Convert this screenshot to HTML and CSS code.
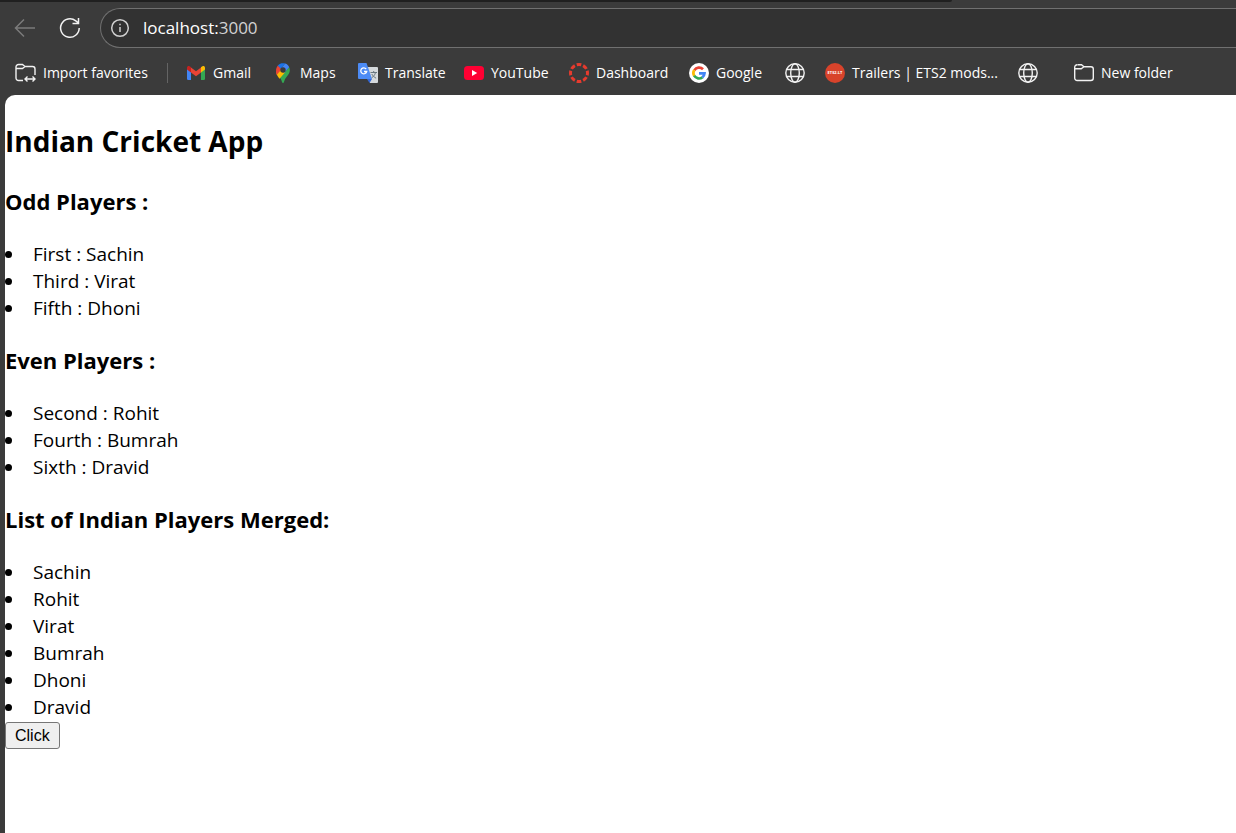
FILE: index.html
```html
<!DOCTYPE html>
<html lang="en">
<head>
<meta charset="utf-8">
<title>Indian Cricket App</title>
<link rel="stylesheet" href="styles.css">
</head>
<body>
<header class="browser">
  <div class="tab-strip"></div>
  <div class="toolbar">
    <button class="tool back" aria-label="Back" disabled><svg width="22" height="22" viewBox="0 0 22 22"><path d="M21 11H2M10 2.500 1.500 11l8.500 8.500"/></svg></button>
    <button class="tool" aria-label="Reload"><svg width="22" height="22" viewBox="0 0 22 22"><path d="M20.200 11a9.300 9.300 0 1 1-3.400-7.200L19.500 6M19.500 1v5.500H13.500"/></svg></button>
    <div class="address">
      <svg width="20" height="20" viewBox="0 0 20 20"><circle cx="10" cy="10" r="8.300"/><path d="M10 9v5M10 5.700v1.600"/></svg>
      <div class="url" role="textbox" aria-label="Address" contenteditable="true">localhost:<span class="port">3000</span></div>
    </div>
  </div>
  <nav class="favorites" aria-label="Favorites">
    <button class="fav import"><svg class="line" width="21" height="20" viewBox="0 0 21 20"><path d="M8 17.500H3.500a2.500 2.500 0 0 1-2.500-2.500V4a2.500 2.500 0 0 1 2.500-2.500h4L10 3.500h7.500A2.500 2.500 0 0 1 20 6v6M1 5.500h6.500L10 3.500M10 16h10M12.500 13.500 10 16l2.500 2.500M17.500 13.500 20 16l-2.500 2.500"/></svg>Import favorites</button>
    <span class="divider"></span>
    <a class="fav gmail" href="#"><svg width="20" height="20" viewBox="0 0 20 20"><path fill="#4285f4" d="M1 5l4 3v9H2.300Q1 17 1 15.700z"/><path fill="#34a853" d="M15 8l4-3v10.700q0 1.300-1.300 1.300H15z"/><path fill="#ea4335" d="M5 4.500l5 3.800 5-3.800v5L10 13.300 5 9.500z"/><path fill="#c5221f" d="M1 5c0-2 2-2.500 3.400-1.300L5 4.200v5.300L1 6.500z"/><path fill="#fbbc04" d="M19 5c0-2-2-2.500-3.400-1.300l-.6.500v5.300l4-3z"/></svg>Gmail</a>
    <a class="fav maps" href="#"><svg width="20" height="20" viewBox="0 0 20 20"><path fill="#34a853" d="M16.200 4.300C18 9 15.500 11.600 13.500 14c-1.500 1.800-2 3-2.500 5-.3 1.300-1.700 1.300-2 0-.5-1.800-1.100-3.200-2.500-4.800z"/><path fill="#fbbc04" d="M12 9.500l-5.500 6.300C5 13.500 3.500 12 3.200 9l4.200-5z"/><path fill="#ea4335" d="M4.800 2.500l4 3.400L3.700 12C2.300 8 3 4.800 4.800 2.500z"/><path fill="#1a73e8" d="M4.800 2.500C7-.1 10-.2 12.200.5L7.800 5.800z"/><path fill="#4285f4" d="M12.200.5c2 .6 3.300 2 4 3.800L11 10 8 5.500z"/><circle cx="10" cy="7" r="2.700" fill="#3b3b3b"/></svg>Maps</a>
    <a class="fav translate" href="#"><svg width="20" height="20" viewBox="0 0 20 20"><path fill="#d5d9dc" d="M9 4h10q1 0 1 1v14q0 1-1 1h-7z"/><path fill="#3367d6" d="M9 16h5l-2.500 4z"/><path fill="#4c8bf5" d="M1 0h7.500l5.500 16H1q-1 0-1-1V1q0-1 1-1z"/><path d="M8.200 6a3 3 0 1 0 .5 2.500H6" fill="none" stroke="#fff" stroke-width="1.300"/><path d="M12.500 9.500h6.500M15.700 8v1.500M17.500 9.500c-.6 2.500-2 4-4 5.500M13.800 11c1 2 2.300 3 4.300 4.200" fill="none" stroke="#687780"/></svg>Translate</a>
    <a class="fav youtube" href="#"><svg width="20" height="20" viewBox="0 0 20 20"><rect y="3" width="20" height="14" rx="3.500" fill="#ff0033"/><path fill="#fff" d="M8 7l5.200 3L8 13z"/></svg>YouTube</a>
    <a class="fav dashboard" href="#"><svg width="20" height="20" viewBox="0 0 20 20"><circle cx="10" cy="10" r="8.500" fill="none" stroke="#e63b2e" stroke-width="3" pathLength="80" stroke-dasharray="7 3" stroke-dashoffset="3.500"/></svg>Dashboard</a>
    <a class="fav google" href="#"><svg width="20" height="20" viewBox="0 0 20 20"><circle cx="10" cy="10" r="10" fill="#fff"/><g fill="none" stroke-width="2.700"><path stroke="#ea4335" d="M5.400 7.200A5.500 5.500 0 0 1 14 6.200"/><path stroke="#fbbc04" d="M5.300 7a5.500 5.500 0 0 0 0 6"/><path stroke="#34a853" d="M5.200 12.700a5.500 5.500 0 0 0 8.300 1.500"/><path stroke="#4285f4" d="M13.300 14.300a5.500 5.500 0 0 0 2.200-4H10"/></g></svg>Google</a>
    <a class="fav globe" href="#" aria-label="Saved page"><svg class="line" width="20" height="20" viewBox="0 0 20 20"><circle cx="10" cy="10" r="9.200"/><ellipse cx="10" cy="10" rx="4.300" ry="9.200"/><path d="M1.800 6.500h16.400M1.800 13.500h16.400"/></svg></a>
    <a class="fav trailers" href="#"><span class="badge">ETS2.LT</span>Trailers | ETS2 mods...</a>
    <a class="fav globe-wide" href="#" aria-label="Saved page"><svg class="line" width="20" height="20" viewBox="0 0 20 20"><circle cx="10" cy="10" r="9.200"/><ellipse cx="10" cy="10" rx="4.300" ry="9.200"/><path d="M1.800 6.500h16.400M1.800 13.500h16.400"/></svg></a>
    <button class="fav"><svg class="line" width="20" height="20" viewBox="0 0 20 20"><path d="M3.500 1.700h4L10 3.700h7A2.300 2.300 0 0 1 19.300 6v9a2.500 2.500 0 0 1-2.500 2.500H3.200A2.500 2.500 0 0 1 .7 15V4.200a2.500 2.500 0 0 1 2.500-2.500M.7 5.700h6.500L10 3.700"/></svg>New folder</button>
  </nav>
</header>
<main class="page">
  <h1>Indian Cricket App</h1>
  <h2>Odd Players :</h2>
  <ul><li>First : Sachin</li><li>Third : Virat</li><li>Fifth : Dhoni</li></ul>
  <h2>Even Players :</h2>
  <ul><li>Second : Rohit</li><li>Fourth : Bumrah</li><li>Sixth : Dravid</li></ul>
  <h2>List of Indian Players Merged:</h2>
  <ul><li>Sachin</li><li>Rohit</li><li>Virat</li><li>Bumrah</li><li>Dhoni</li><li>Dravid</li></ul>
  <button class="click">Click</button>
</main>
</body>
</html>
```
FILE: styles.css
```css
* { box-sizing: border-box; }
body {
  margin: 0;
  min-height: 100vh;
  display: flex;
  flex-direction: column;
  background: #3b3b3b;
  font-family: "Open Sans", "Noto Sans", sans-serif;
}
button { font: inherit; color: inherit; }
.browser { color: #fff; }
.tab-strip { width: 77%; height: 2px; background: #202020; border-bottom-right-radius: 2px; }
.toolbar { display: flex; align-items: center; padding-top: 6px; padding-left: 14px; }
.tool {
  display: flex;
  margin-right: 23px;
  padding: 0;
  border: 0;
  background: none;
}
.tool svg { fill: none; stroke: #f2f2f2; stroke-width: 1.5; }
.back svg { stroke: #7b7b7b; }
.address {
  flex: 1;
  display: flex;
  align-items: center;
  gap: 13px;
  height: 40px;
  padding-left: 9px;
  margin-left: -4px;
  border: 1px solid #707070;
  border-right: 0;
  border-radius: 20px 0 0 20px;
  background: #323232;
}
.address svg { fill: none; stroke: #d0d0d0; stroke-width: 1.5; }
.url { font-size: 17px; line-height: 24px; outline: 0; white-space: nowrap; }
.port { color: #d2d2d2; }
.favorites {
  display: flex;
  align-items: center;
  height: 47px;
  padding: 3px 0 0 15px;
  overflow: hidden;
  font-size: 14px;
  line-height: 20px;
}
.fav {
  flex: none;
  display: flex;
  align-items: center;
  gap: 7px;
  padding: 0;
  border: 0;
  background: none;
  color: #fff;
  text-decoration: none;
  white-space: nowrap;
}
.line { fill: none; stroke: #f2f2f2; stroke-width: 1.4; }
.divider { width: 1px; height: 20px; margin-right: 18px; background: #646464; }
.import { width: 152px; }
.gmail { width: 87px; }
.maps { width: 85px; }
.translate { width: 106px; }
.youtube { width: 105px; }
.dashboard { width: 120px; }
.google { width: 96px; }
.globe { width: 40px; }
.trailers { width: 193px; }
.globe-wide { width: 56px; }
.badge {
  display: flex;
  align-items: center;
  justify-content: center;
  width: 20px;
  height: 20px;
  border-radius: 50%;
  background: #d8432b;
  font-size: 4px;
  font-weight: 700;
}
.page {
  flex: 1;
  margin-left: 5px;
  padding-top: 26px;
  border-top-left-radius: 10px;
  background: #fff;
  color: #000;
  font-size: 19px;
  line-height: 27px;
}
h1 { margin: 0 0 25px; font-size: 28px; line-height: 40px; }
h2 { margin: 23px 0 25px; font-size: 22px; line-height: 30px; }
ul { margin: 0; padding: 0; list-style: none; }
li { display: flex; align-items: center; gap: 21px; }
li::before { content: ""; width: 7px; height: 7px; border-radius: 50%; background: #000; }
.click {
  display: block;
  height: 27px;
  margin-top: 1px;
  padding: 0 9px;
  border: 1px solid #767676;
  border-radius: 3px;
  background: #efefef;
  font-family: "Liberation Sans", Arial, sans-serif;
  font-size: 16px;
  line-height: 25px;
}
```
